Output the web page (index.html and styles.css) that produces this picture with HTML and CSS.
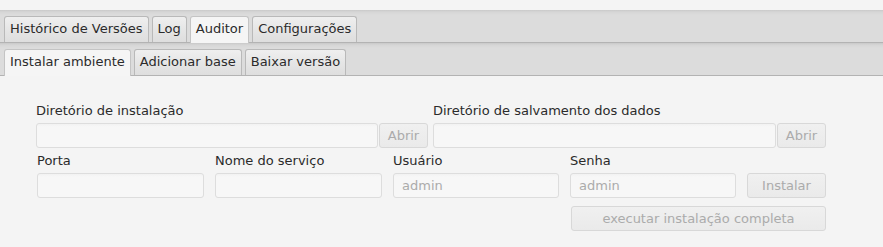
FILE: index.html
```html
<!DOCTYPE html>
<html lang="pt">
<head>
<meta charset="utf-8">
<title>Auditor</title>
<link rel="stylesheet" href="styles.css">
</head>
<body>
<div class="top-gap"></div>
<div class="tabbar">
  <div class="tab">Histórico de Versões</div>
  <div class="tab">Log</div>
  <div class="tab sel">Auditor</div>
  <div class="tab">Configurações</div>
</div>
<div class="tabbar">
  <div class="tab sel">Instalar ambiente</div>
  <div class="tab">Adicionar base</div>
  <div class="tab">Baixar versão</div>
</div>
<div class="form">
  <div class="row1">
    <div class="group">
      <div class="label">Diretório de instalação</div>
      <div class="inline">
        <div class="field wide1"></div>
        <div class="btn small">Abrir</div>
      </div>
    </div>
    <div class="group">
      <div class="label">Diretório de salvamento dos dados</div>
      <div class="inline">
        <div class="field wide2"></div>
        <div class="btn small">Abrir</div>
      </div>
    </div>
  </div>
  <div class="grid">
    <div class="group">
      <div class="label">Porta</div>
      <div class="field"></div>
    </div>
    <div class="group">
      <div class="label">Nome do serviço</div>
      <div class="field"></div>
    </div>
    <div class="group">
      <div class="label">Usuário</div>
      <div class="field"><span class="ph">admin</span></div>
    </div>
    <div class="group">
      <div class="label">Senha</div>
      <div class="field"><span class="ph">admin</span></div>
    </div>
    <div class="group">
      <div class="label"></div>
      <div class="btn">Instalar</div>
    </div>
    <div class="btn full">executar instalação completa</div>
  </div>
</div>
</body>
</html>
```
FILE: styles.css
```css
html, body {
  margin: 0;
  padding: 0;
}
body {
  background: #f4f4f4;
  font-family: "DejaVu Sans", "Liberation Sans", sans-serif;
  font-size: 13px;
  color: #333;
  width: 883px;
  height: 247px;
  overflow: hidden;
}
.top-gap {
  height: 10px;
}
.tabbar {
  display: flex;
  align-items: flex-end;
  gap: 3px;
  height: 32px;
  box-sizing: content-box;
  padding: 0 0 0 4px;
  background: linear-gradient(to bottom, #c9c9c9 0px, #d6d6d6 2px, #dcdcdc 5px, #dcdcdc 100%);
  border-bottom: 1px solid #b3b3b3;
}
.tab {
  box-sizing: border-box;
  height: 26px;
  line-height: 24px;
  padding: 0 5px;
  border: 1px solid #b9b9b9;
  border-bottom: none;
  border-radius: 3px 3px 0 0;
  background: linear-gradient(to bottom, #efefef 0%, #e4e4e4 60%, #dedede 100%);
  color: #2b2b2b;
  white-space: nowrap;
}
.tab.sel {
  background: #f5f5f5;
  height: 27px;
  margin-bottom: -1px;
  border-color: #c4c4c4;
}
.form {
  padding: 27px 0 0 36px;
}
.row1 {
  display: flex;
  gap: 5px;
}
.group {
  display: flex;
  flex-direction: column;
}
.label {
  height: 16px;
  line-height: 16px;
  margin-bottom: 4px;
  white-space: nowrap;
  color: #2b2b2b;
}
.inline {
  display: flex;
  gap: 1px;
}
.field {
  box-sizing: border-box;
  height: 25px;
  background: linear-gradient(to bottom, #f2f2f2 0px, #f7f7f7 3px, #f7f7f7 100%);
  border: 1px solid #dddddd;
  border-radius: 3px;
  padding: 0 8px;
  line-height: 23px;
}
.wide1 {
  width: 342px;
}
.wide2 {
  width: 343px;
}
.ph {
  color: #ababab;
}
.btn {
  box-sizing: border-box;
  height: 25px;
  line-height: 23px;
  text-align: center;
  background: linear-gradient(to bottom, #f0f0f0 0%, #eaeaea 100%);
  border: 1px solid #d8d8d8;
  border-radius: 3px;
  color: #ababab;
  white-space: nowrap;
}
.btn.small {
  width: 49px;
}
.grid {
  display: grid;
  grid-template-columns: 167px 167px 166px 166px 79px;
  column-gap: 11px;
  row-gap: 8px;
  margin-top: 5px;
  padding-left: 1px;
}
.btn.full {
  grid-column: 4 / 6;
  margin-left: 1px;
}
```
